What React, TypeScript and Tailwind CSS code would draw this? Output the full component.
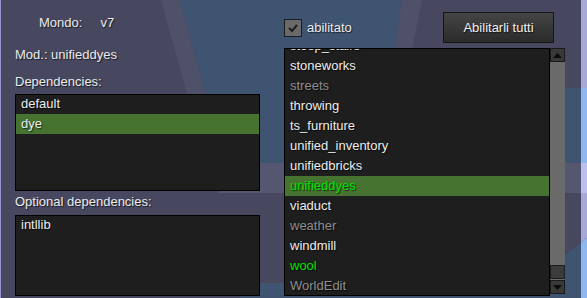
import React from "react";

const deps = ["default", "dye"];
const optDeps = ["intllib"];

type Mod = { name: string; tone: "normal" | "off" | "on" };

const mods: Mod[] = [
  { name: "steep_stairs", tone: "normal" },
  { name: "stoneworks", tone: "normal" },
  { name: "streets", tone: "off" },
  { name: "throwing", tone: "normal" },
  { name: "ts_furniture", tone: "normal" },
  { name: "unified_inventory", tone: "normal" },
  { name: "unifiedbricks", tone: "normal" },
  { name: "unifieddyes", tone: "on" },
  { name: "viaduct", tone: "normal" },
  { name: "weather", tone: "off" },
  { name: "windmill", tone: "normal" },
  { name: "wool", tone: "on" },
  { name: "WorldEdit", tone: "off" },
];

const shadow = "[text-shadow:1px_1px_1px_rgba(0,0,0,0.65)]";

function Backdrop() {
  return (
    <svg className="absolute inset-0" width="587" height="298" viewBox="0 0 587 298">
      <rect width="587" height="298" fill="#474860" />
      <polygon points="161,0 180,0 225,165 207,165" fill="#4f506a" />
      <polygon points="180,0 402,0 388,88 581,88 581,163 225,163" fill="#3e5470" />
      <polygon points="402,0 422,0 404,88 388,88" fill="#4f506a" />
      <polygon points="232,163 581,163 581,193 218,193" fill="#55566f" />
      <polygon points="240,283 528,283 581,243 581,298 240,298" fill="#3e5470" />
      <rect x="0" y="0" width="1" height="298" fill="#9898d0" />
      <rect x="581" y="0" width="6" height="88" fill="#a7a7d9" />
      <rect x="581" y="88" width="6" height="75" fill="#8cb8f0" />
      <rect x="581" y="163" width="6" height="30" fill="#bdbdf1" />
      <polygon points="581,193 587,193 587,238 581,243" fill="#a7a7d9" />
      <polygon points="581,243 587,238 587,298 581,298" fill="#8cb8f0" />
    </svg>
  );
}

function Arrow({ up }: { up?: boolean }) {
  return (
    <svg width="9" height="5" viewBox="0 0 9 5">
      <polygon points={up ? "4.5,0 9,5 0,5" : "0,0 9,0 4.5,5"} fill="#0c0c0c" />
    </svg>
  );
}

function SmallList({ items, selected, height }: { items: string[]; selected?: string; height: string }) {
  return (
    <div className={`border border-black bg-[#1e1e1e] overflow-hidden ${height}`}>
      <div className="-mt-px">
        {items.map((it) => (
          <div
            key={it}
            className={`h-5 leading-5 pl-[5px] text-[#ececec] ${shadow} ${it === selected ? "bg-[#467330]" : ""}`}
          >
            {it}
          </div>
        ))}
      </div>
    </div>
  );
}

export default function App() {
  return (
    <div className="relative w-[587px] h-[298px] overflow-hidden font-['Liberation_Sans',sans-serif] text-[13px]">
      <Backdrop />
      <div className="relative flex">
        <div className="ml-[15px] w-[245px] flex flex-col">
          <div className={`mt-[13px] pl-[24px] flex gap-[18px] leading-5 text-[#ececec] ${shadow}`}>
            <span>Mondo:</span>
            <span>v7</span>
          </div>
          <div className={`mt-[12px] leading-5 text-[#ececec] ${shadow}`}>Mod.: unifieddyes</div>
          <div className={`mt-[7px] leading-5 text-[#ececec] ${shadow}`}>Dependencies:</div>
          <div className="mt-[2px]">
            <SmallList items={deps} selected="dye" height="h-[97px]" />
          </div>
          <div className={`mt-[1px] leading-5 text-[#ececec] ${shadow}`}>Optional dependencies:</div>
          <div className="mt-[3px]">
            <SmallList items={optDeps} height="h-[81px]" />
          </div>
        </div>

        <div className="ml-[24px] w-[281px] flex flex-col">
          <div className="flex items-start">
            <div className="mt-[18px] flex items-center">
              <div className="w-[18px] h-[18px] border border-[#1c1c1c] bg-[#6a6a6a] flex items-center justify-center">
                <svg width="12" height="10" viewBox="0 0 12 10">
                  <path d="M2 5 L5 8 L10 2" stroke="#1e1e1e" strokeWidth="2" fill="none" />
                </svg>
              </div>
              <span className={`ml-[5px] text-[#ececec] ${shadow}`}>abilitato</span>
            </div>
            <button className={`ml-auto mr-[11px] mt-[12px] w-[111px] h-[31px] border border-[#151515] bg-linear-to-b from-[#454545] to-[#2b2b2b] text-[#f0f0f0] ${shadow}`}>
              Abilitarli tutti
            </button>
          </div>

          <div className="mt-[5px] flex">
            <div className="w-[266px] h-[248px] border border-black bg-[#1e1e1e] overflow-hidden">
              <div className="-mt-[13px]">
                {mods.map((m) => (
                  <div
                    key={m.name}
                    className={`h-5 leading-5 pl-[5px] ${shadow} ${
                      m.tone === "on" ? "text-[#00e000]" : m.tone === "off" ? "text-[#8e8e8e]" : "text-[#ececec]"
                    } ${m.name === "unifieddyes" ? "bg-[#467330]" : ""}`}
                  >
                    {m.name}
                  </div>
                ))}
              </div>
            </div>
            <div className="w-[15px] h-[246px] flex flex-col">
              <div className="h-[14px] bg-[#393939] border border-[#1a1a1a] flex items-center justify-center">
                <Arrow up />
              </div>
              <div className="flex-1 bg-[#6a6a6a] flex flex-col justify-end pb-[1px]">
                <div className="h-[14px] bg-[#3b3b3b] border border-[#1e1e1e]" />
              </div>
              <div className="h-[14px] bg-[#393939] border border-[#1a1a1a] flex items-center justify-center">
                <Arrow />
              </div>
            </div>
          </div>
        </div>
      </div>
    </div>
  );
}
